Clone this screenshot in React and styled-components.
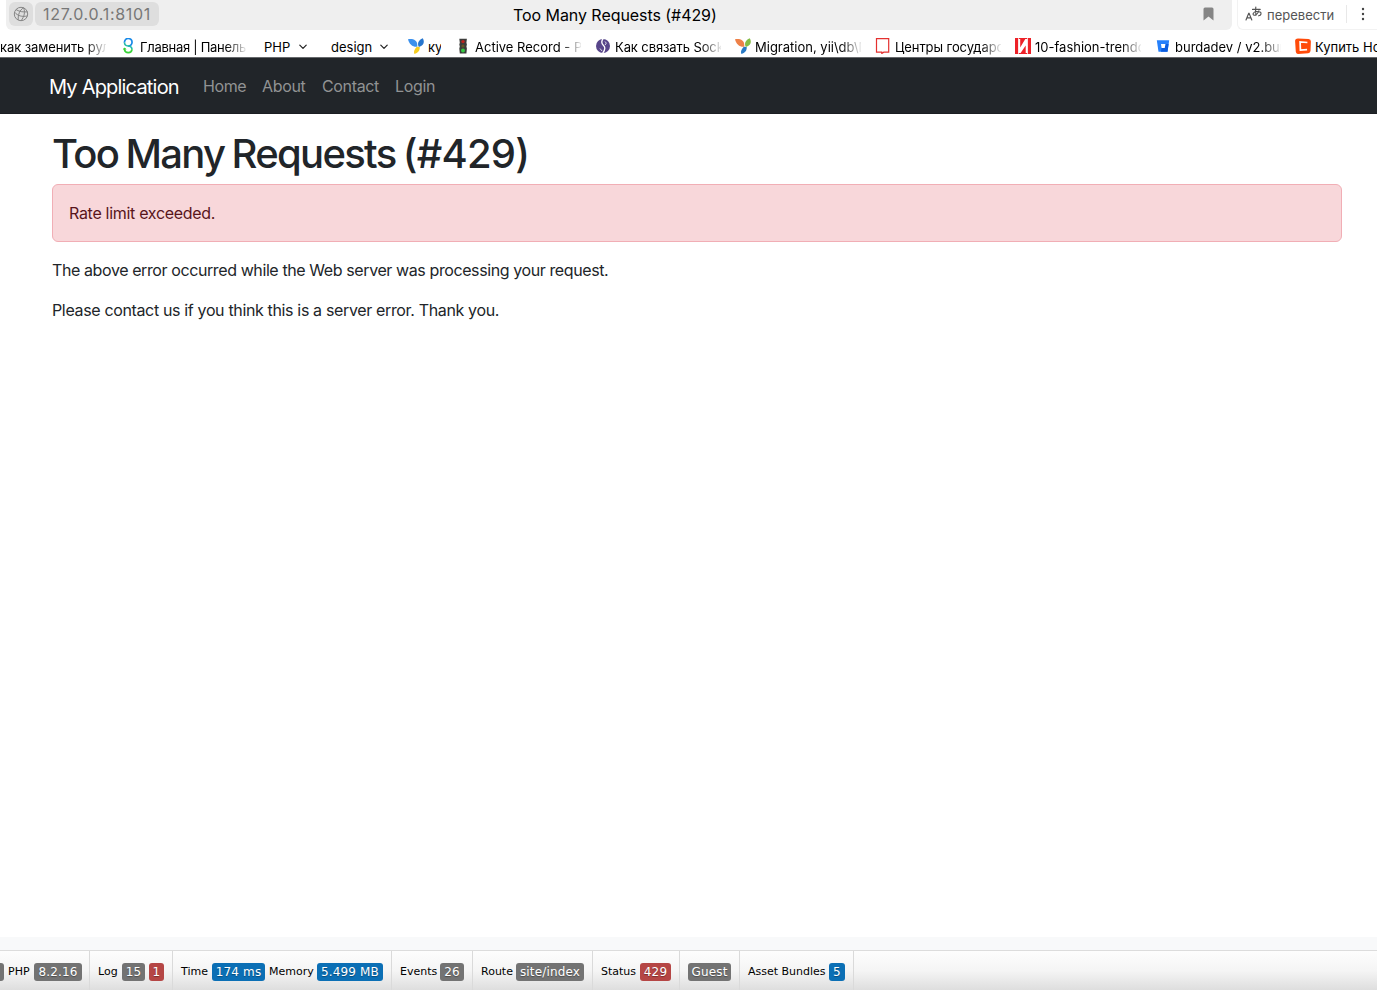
import React from "react";
import styled, { createGlobalStyle } from "styled-components";

const Global = createGlobalStyle`
  * { box-sizing: border-box; }
  body { margin: 0; background: #fff; overflow: hidden; font-family: Inter, "Noto Sans", sans-serif; color: #212529; }
  h1, p { margin: 0; }
`;
const Page = styled.div`display: flex; flex-direction: column; height: 990px; width: 1377px; overflow: hidden;`;
const T = styled.span`white-space: nowrap; letter-spacing: ${(p) => p.$ls || 0}px; word-spacing: ${(p) => p.$ws || 0}px;`;

const AddressRow = styled.div`display: flex; height: 30px; flex: none;`;
const AddressBar = styled.div`
  display: flex; align-items: center; margin-left: 6px; width: 1226px; height: 30px; padding: 0 17px 2px 3px;
  background: #efefef; border-radius: 0 0 6px 6px;
`;
const Chip = styled.div`
  display: flex; align-items: center; justify-content: center; height: 24px; width: ${(p) => p.$w}px;
  margin-right: 2px; border-radius: 6px; background: #dedede; color: #777; font-size: 16px;
`;
const PageTitle = styled.div`
  flex: 1; padding: 1px 0 0 352px; font-size: 16px; line-height: 28px; color: #000;
`;
const Translate = styled.div`
  display: flex; align-items: center; margin-left: 5px; width: 140px; height: 30px; padding: 0 0 1px 7px;
  border: 1px solid #f2f2f2; border-top: 0; border-right: 0; border-radius: 0 0 0 6px; color: #555; font-size: 13px;
`;
const TranslateLabel = styled.div`flex: none; width: 79px; margin-left: 5px; line-height: 28px; padding-top: 1px;`;
const Divider = styled.div`flex: none; width: 1px; height: 18px; background: #e8e8e8;`;
const Dots = styled.svg`flex: none;`;

const Bookmarks = styled.div`
  display: flex; align-items: center; gap: 14px; height: 28px; flex: none; padding-top: 5px; color: #000;
  font-size: 13px; line-height: 20px; overflow: hidden; border-bottom: 1px solid #66686b;
`;
const Bookmark = styled.div`display: flex; align-items: center; gap: 4px; flex: none; width: ${(p) => p.$w || 126}px;`;
const BookmarkText = styled.div`
  flex: 1; overflow: hidden; padding-top: 1px; white-space: nowrap;
  ${(p) => p.$fade && "mask-image: linear-gradient(90deg, #000 calc(100% - 20px), rgba(0, 0, 0, 0.08));"}
`;
const Folder = styled.div`
  display: flex; align-items: center; justify-content: space-between; flex: none; width: ${(p) => p.$w}px; padding: 1px 6px 0 4px;
`;

const Navbar = styled.nav`
  display: flex; align-items: center; height: 56px; flex: none; padding: 1px 0 0 49px; background: #212529;
  border-bottom: 1px solid #1b1e22;
`;
const Brand = styled.div`width: 154px; font-size: 20px; line-height: 30px; color: #fff; padding-top: 1px;`;
const NavLink = styled.div`width: ${(p) => p.$w}px; font-size: 16px; line-height: 24px; color: #919394;`;

const Main = styled.main`flex: 1; padding: 14px 35px 0 52px; font-size: 16px; line-height: 24px;`;
const Heading = styled.h1`font-size: 40px; line-height: 48px; font-weight: 500; margin-bottom: 8px; padding-top: 2px; height: 48px;`;
const Alert = styled.div`
  margin-bottom: 16px; padding: 16px; border: 1px solid #f1aeb5; border-radius: 6px; background: #f8d7da; color: #58151c;
`;
const Para = styled.p`margin-bottom: 16px;`;
const Footer = styled.div`height: 13px; flex: none; background: #f8f9fa;`;

const DebugBar = styled.div`
  display: flex; height: 40px; flex: none; border-top: 1px solid #dcdcdc; overflow: hidden;
  background: linear-gradient(#fdfdfd, #f5f5f5 50%, #dedede); font-family: "DejaVu Sans", Verdana, sans-serif;
`;
const Block = styled.div`
  display: flex; align-items: center; gap: 4px; flex: none; width: ${(p) => p.$w}px; padding: 3px 0 0 8px;
  border-right: 1px solid #dadada; color: #000; font-size: 11px;
  ${(p) => p.$first && "padding-left: 0;"}
`;
const DebugLabel = styled.span`width: ${(p) => p.$w}px; white-space: nowrap; padding-bottom: 2px; margin-right: -1px;`;
const tones = { gray: "#737373", red: "#b54645", blue: "#0b6fb5" };
const Badge = styled.span`
  display: flex; justify-content: center; align-items: center; flex: none; width: ${(p) => p.$w}px; height: 18px;
  border-radius: 3px; background: ${(p) => tones[p.$tone]}; color: #fff; font-size: 12px; white-space: nowrap;
  letter-spacing: 0.15px; text-shadow: 0 1px 1px rgba(0, 0, 0, 0.35);
`;
const BadgeStub = styled.span`width: 4px; height: 18px; background: #737373; border-radius: 0 3px 3px 0;`;

const Chevron = () => (
  <svg width="8" height="6" viewBox="0 0 8 6" fill="none" stroke="#222" strokeWidth="1.2" strokeLinecap="round" strokeLinejoin="round"><path d="M.8 1.2 4 4.4 7.2 1.2" /></svg>
);
const IconSvg = styled.svg`flex: none;`;
const Icon = ({ children }) => <IconSvg width="16" height="16" viewBox="0 0 16 16" fill="none">{children}</IconSvg>;
const Globe = () => (
  <svg width="16" height="16" viewBox="0 0 16 16" fill="none" stroke="#858585" strokeWidth="1">
    <circle cx="8" cy="8" r="6.7" />
    <path d="M10.600 1.800C6.500 4.200 5 8.500 5.200 14M10.600 1.800c1.700 4.200.8 8.500-2.400 12.800M1.600 6.200c3 3.800 7.600 4.800 12.700 3.800M3 3.600c3.800 2.200 7.700 2.700 11.500 2.200" />
  </svg>
);
const TranslateIcon = () => (
  <IconSvg width="17" height="16" viewBox="0 0 17 16" fill="none" stroke="#555" strokeWidth="1.15" strokeLinecap="round">
    <path d="M1 14 3.700 7.400h.4L6.800 14M2 11.800h4" />
    <path d="M7.500 3.400h7.700M10.800 1c-.4 3-.3 6 .2 8.200M13.900 4.800C13 7.200 10.800 9.500 9 9.200c-2-.4-.6-3.700 2.700-3.700 3.100 0 4.700.8 4.300 2.500-.3 1.200-1.400 1.700-2.400 1.800" />
  </IconSvg>
);
const Swirl = () => (
  <Icon>
    <path d="M4.500 4.600A3.800 3.800 0 1 1 8 8" stroke="#1889e8" strokeWidth="1.700" />
    <path d="M4.500 4.600C4.500 7 6 7.900 8 8s4 1 4 3.600" stroke="#23bba9" strokeWidth="1.600" />
    <path d="M12 11.400a3.800 3.800 0 0 1-7.500.2V10" stroke="#38d238" strokeWidth="1.700" /><path d="M2.800 11.400 4.600 9.400l2 2" fill="#38d238" />
  </Icon>
);
const Yii = ({ left, right, stem }) => (
  <Icon>
    <path d="M0 1.200C4.500.2 9.300 1.800 9.300 7v1.800C4.600 9.300 1.300 6.200 0 1.200Z" fill={left} />
    <path d="M14.800.3c2 3.600 1.300 6.900-3.900 8.600-2.100-3.300-.4-6.900 3.900-8.600Z" fill={right} />
    <path d="M8.700 8.800l3 .3c.3 3.900-1.900 6-5.200 6.900-1.200-2.800.3-4.600 2.200-7.200Z" fill={stem} />
  </Icon>
);
const TrafficLight = () => (
  <Icon>
    <path d="M4.300.8h7.600l-.5 4 .5 1.700-.5 2 .5 2-.5 5H4.800l-.5-5 .5-2-.5-2 .5-1.700Z" fill="#3c3c3b" />
    <circle cx="8" cy="3.600" r="1.700" fill="#be2420" /><circle cx="8" cy="8" r="1.600" fill="#665525" /><circle cx="8" cy="12.500" r="2" fill="#35ca42" />
  </Icon>
);
const Purple = () => (
  <Icon><circle cx="8" cy="8" r="7" fill="#57458a" /><path d="M8.300.4C5.900 3.400 6.300 5.400 8.500 7.400s1.700 4.500-.9 7.900" stroke="#fff" strokeWidth="1.300" /><path d="M5 10.500 7 13M10 3.500l1.300 1.600-1.300 2" stroke="#fff" strokeWidth=".8" /></Icon>
);
const RedFrame = () => <Icon><path d="M1.500.6h12.200v13.600H8.800L6.800 15.500v-1.300H1.500Z" stroke="#e4302f" strokeWidth="1.200" /></Icon>;
const RedStripe = () => (
  <Icon><path d="M0 0h16v16H0Z" fill="#ed2128" /><path d="M3.400 1h1.800v8.500L10.300 1h2.200v14h-1.800V7.500L5.600 15H3.400Z" fill="#fff" /><path d="M3 0h.7v16H3ZM12.300 0h.7v16h-.7Z" fill="#fff" /></Icon>
);
const Bucket = () => (
  <Icon><path d="M1.800 2.300h12.400l-1.700 11.400h-9Z" fill="#2680fb" /><path d="M10.500 6h3.100l-1.100 7.700h-6.500L6.600 10h3.100Z" fill="#0c5de0" /><path d="M6 6h4.400l-.7 4H6.600Z" fill="#fff" /></Icon>
);
const OrangeC = () => (
  <Icon><path d="M3 .5 13.500 1Q16 1.200 15.900 3.400L15.500 13q-.2 2-2.300 2.200L3 15.900Q1 16 .8 13.800L.1 3Q0 .6 3 .5Z" fill="#ff4b0a" /><path d="M12.400 4.500 5.100 4l.3 8 6.700-.4" stroke="#fff" strokeWidth="1.700" /></Icon>
);

export default function App() {
  return (
    <Page>
      <Global />
      <AddressRow>
        <AddressBar>
          <Chip $w={24}><Globe /></Chip>
          <Chip $w={124}><T $ls={0.68}>127.0.0.1:8101</T></Chip>
          <PageTitle><T $ls={-0.06}>Too Many Requests (#429)</T></PageTitle>
          <svg width="13" height="14" viewBox="0 0 13 14"><path d="M1.500 2q0-1.500 1.500-1.500h7Q11.500.5 11.500 2v11.500L6.500 9.500l-5 4Z" fill="#858585" /></svg>
        </AddressBar>
        <Translate>
          <TranslateIcon />
          <TranslateLabel><T $ls={0.02}>перевести</T></TranslateLabel>
          <Divider />
          <Dots width="32" height="16" viewBox="0 0 32 16" fill="#444"><circle cx="16" cy="3" r="1.200" /><circle cx="16" cy="8" r="1.200" /><circle cx="16" cy="13" r="1.200" /></Dots>
        </Translate>
      </AddressRow>
      <Bookmarks>
        <Bookmark $w={106}><BookmarkText $fade><T $ls={-0.08}>как заменить рул</T></BookmarkText></Bookmark>
        <Bookmark><Swirl /><BookmarkText $fade><T $ls={-0.28}>Главная | Панель</T></BookmarkText></Bookmark>
        <Folder $w={53}><T>PHP</T><Chevron /></Folder>
        <Folder $w={67}><T>design</T><Chevron /></Folder>
        <Bookmark $w={33}><Yii left="#3c91ed" right="#2776ce" stem="#f6cd20" /><BookmarkText><T>ку</T></BookmarkText></Bookmark>
        <Bookmark><TrafficLight /><BookmarkText $fade><T>Active Record - P</T></BookmarkText></Bookmark>
        <Bookmark><Purple /><BookmarkText $fade><T $ls={-0.1}>Как связать Sock</T></BookmarkText></Bookmark>
        <Bookmark><Yii left="#ee8148" right="#83bd45" stem="#2879c4" /><BookmarkText $fade><T>Migration, yii\db\M</T></BookmarkText></Bookmark>
        <Bookmark><RedFrame /><BookmarkText $fade><T $ls={-0.08}>Центры государс</T></BookmarkText></Bookmark>
        <Bookmark><RedStripe /><BookmarkText $fade><T>10-fashion-trendo</T></BookmarkText></Bookmark>
        <Bookmark><Bucket /><BookmarkText $fade><T>burdadev / v2.bur</T></BookmarkText></Bookmark>
        <Bookmark><OrangeC /><BookmarkText><T>Купить Но</T></BookmarkText></Bookmark>
      </Bookmarks>
      <Navbar>
        <Brand><T $ls={-0.8}>My Application</T></Brand>
        <NavLink $w={59}><T $ls={-0.4}>Home</T></NavLink>
        <NavLink $w={60}><T $ls={-0.35}>About</T></NavLink>
        <NavLink $w={73}><T $ls={-0.35}>Contact</T></NavLink>
        <NavLink $w={60}><T $ls={-0.35}>Login</T></NavLink>
      </Navbar>
      <Main>
        <Heading><T $ls={-1.7} $ws={-1.7}>Too Many Requests </T><T $ls={-0.8}>(#429)</T></Heading>
        <Alert><T $ls={-0.3}>Rate limit exceeded.</T></Alert>
        <Para><T $ls={-0.4}>The above error occurred while the Web server was processing your request.</T></Para>
        <Para><T $ls={-0.35}>Please contact us if you think this is a server error. Thank you.</T></Para>
      </Main>
      <Footer />
      <DebugBar>
        <Block $w={90} $first><BadgeStub /><DebugLabel $w={23}>PHP</DebugLabel><Badge $w={48} $tone="gray">8.2.16</Badge></Block>
        <Block $w={83}><DebugLabel $w={21}>Log</DebugLabel><Badge $w={23} $tone="gray">15</Badge><Badge $w={15} $tone="red">1</Badge></Block>
        <Block $w={219}><DebugLabel $w={28}>Time</DebugLabel><Badge $w={53} $tone="blue">174 ms</Badge><DebugLabel $w={45}>Memory</DebugLabel><Badge $w={66} $tone="blue">5.499 MB</Badge></Block>
        <Block $w={81}><DebugLabel $w={37}>Events</DebugLabel><Badge $w={24} $tone="gray">26</Badge></Block>
        <Block $w={120}><DebugLabel $w={32}>Route</DebugLabel><Badge $w={68} $tone="gray">site/index</Badge></Block>
        <Block $w={87}><DebugLabel $w={36}>Status</DebugLabel><Badge $w={31} $tone="red">429</Badge></Block>
        <Block $w={60}><Badge $w={43} $tone="gray">Guest</Badge></Block>
        <Block $w={114}><DebugLabel $w={78}>Asset Bundles</DebugLabel><Badge $w={16} $tone="blue">5</Badge></Block>
      </DebugBar>
    </Page>
  );
}
